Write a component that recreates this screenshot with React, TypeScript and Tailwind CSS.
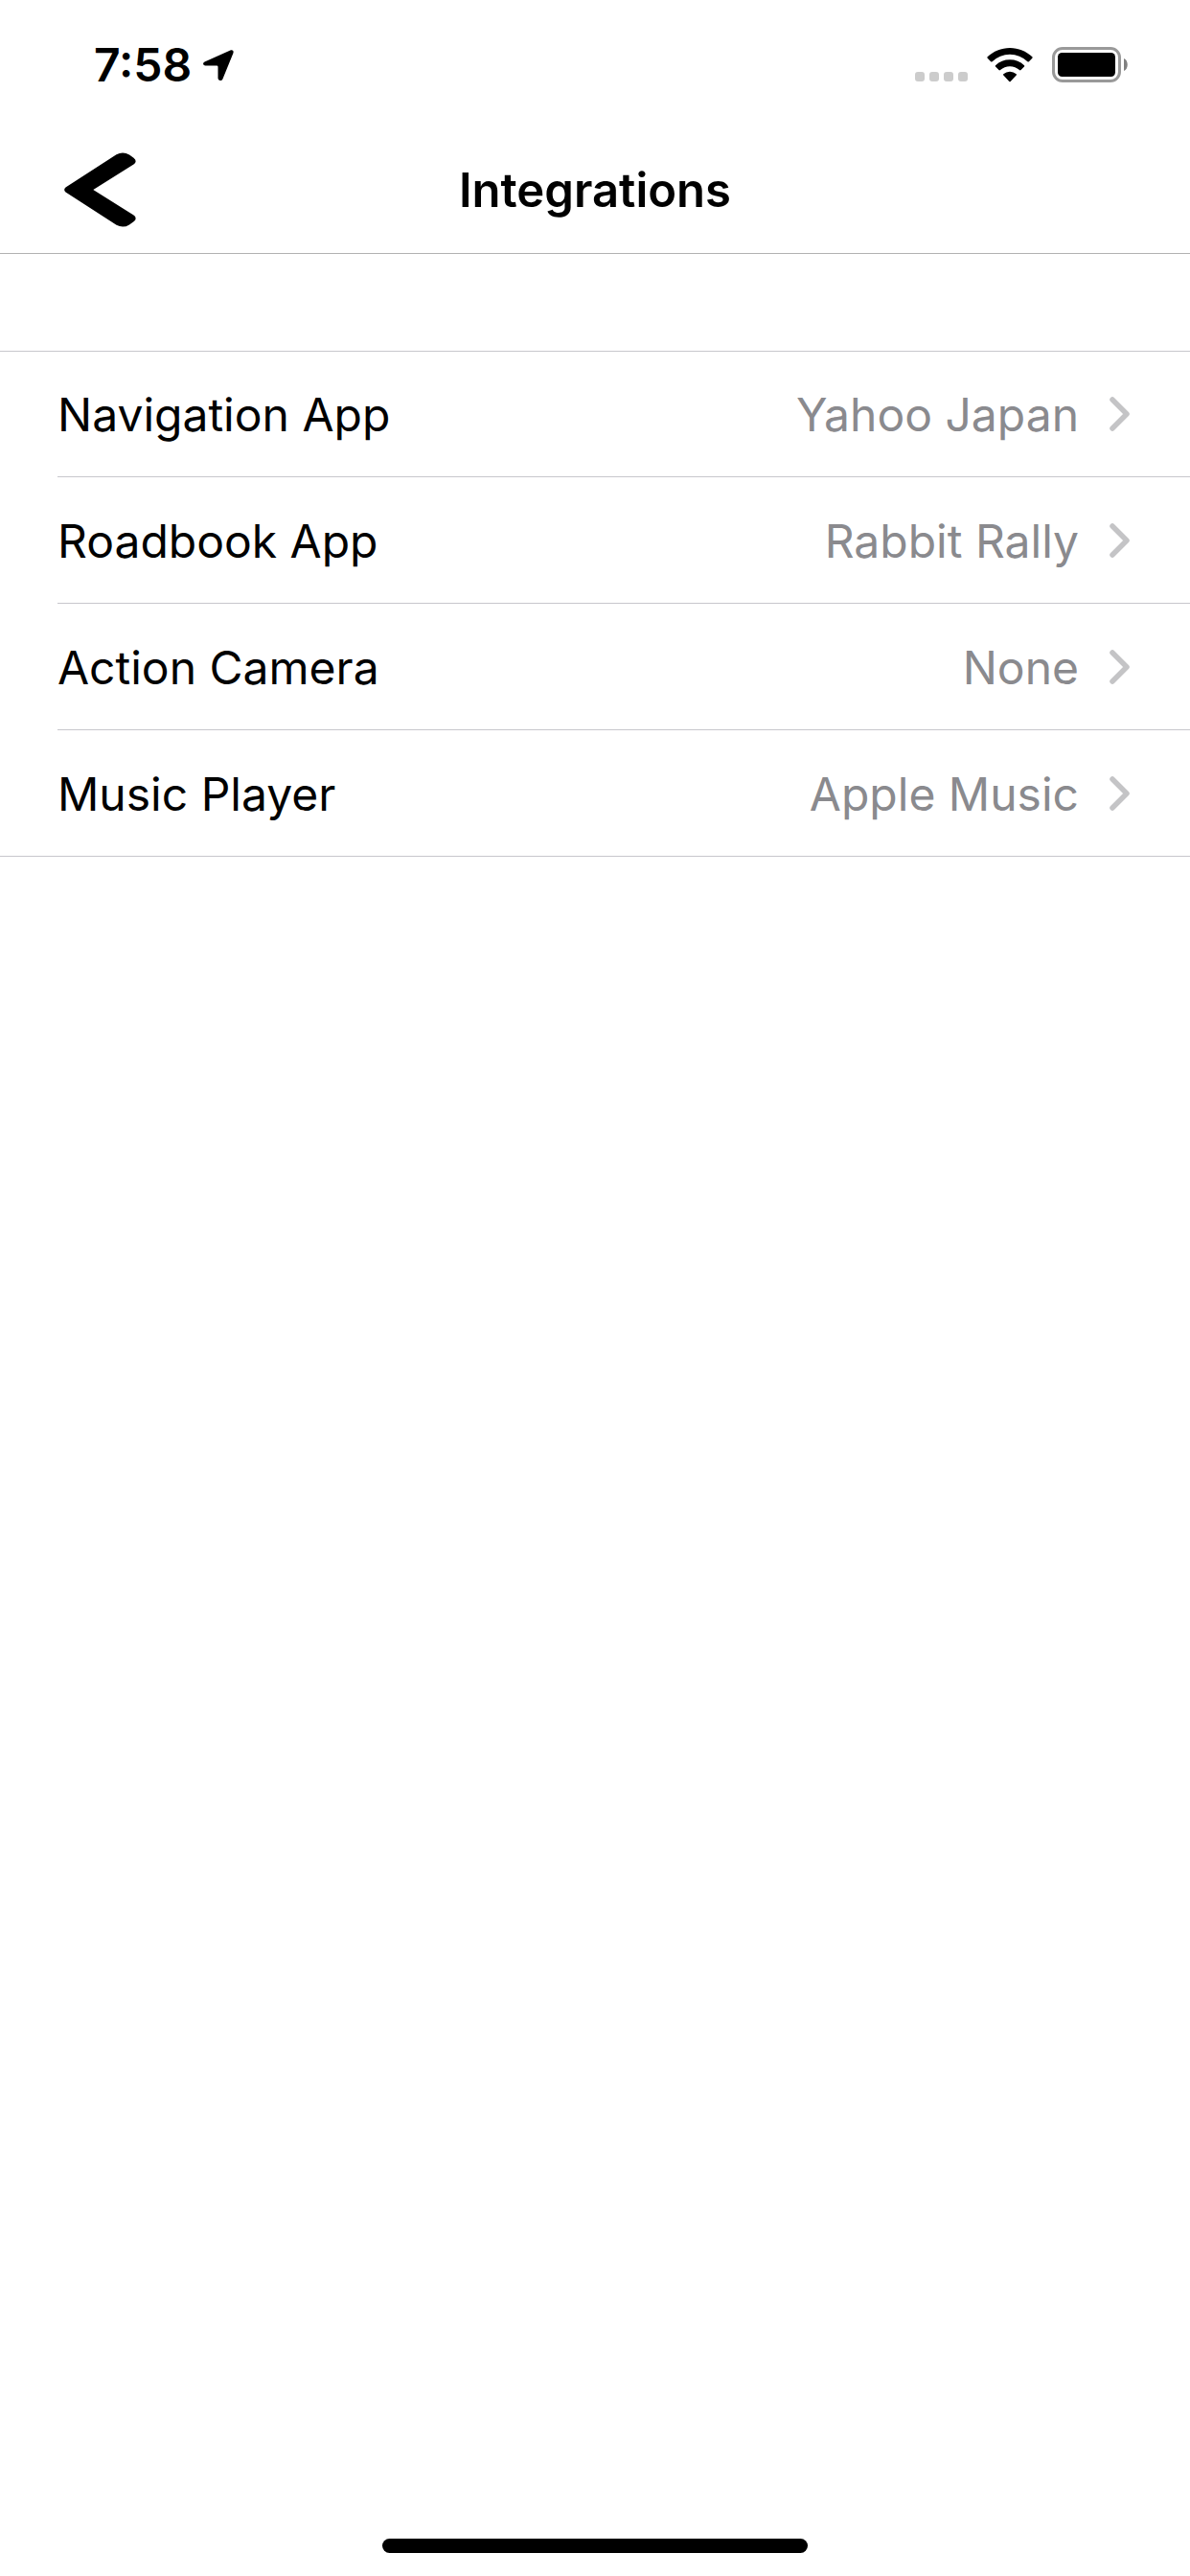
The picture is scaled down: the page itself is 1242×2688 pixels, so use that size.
const integrations = [
  { label: "Navigation App", value: "Yahoo Japan" },
  { label: "Roadbook App", value: "Rabbit Rally" },
  { label: "Action Camera", value: "None" },
  { label: "Music Player", value: "Apple Music" },
];

function LocationArrow() {
  return (
    <svg className="h-8 w-8" viewBox="0 0 32 32" aria-hidden="true">
      <path
        d="M1.6 12.6 28.4.6C30.6-.3 32.2 1 31.4 3.400L20.400 30.400C19.400 32.600 15.600 32.600 15.500 29.600V17.800Q15.500 16.400 14.100 16.400H2.400C-.2 16.300-.8 13.700 1.600 12.600Z"
        fill="currentColor"
      />
    </svg>
  );
}

function SignalDots() {
  return (
    <div className="flex gap-[5px] pt-6" role="img" aria-label="No signal">
      <span className="size-[10px] rounded-[3px] bg-[#cccccc]" />
      <span className="size-[10px] rounded-[3px] bg-[#cccccc]" />
      <span className="size-[10px] rounded-[3px] bg-[#cccccc]" />
      <span className="size-[10px] rounded-[3px] bg-[#cccccc]" />
    </div>
  );
}

function WifiIcon() {
  return (
    <svg className="h-9 w-12" viewBox="0 0 48 36" role="img" aria-label="Wi-Fi">
      <g fill="currentColor">
        <path d="M24 0C33 0 41.200 3.500 47.300 9.300Q48 10 47.300 10.700L43.900 14.200Q43.200 14.900 42.400 14.200A26.500 26.500 0 0 0 5.600 14.200Q4.800 14.900 4.100 14.200L.7 10.700Q0 10 .7 9.300C6.800 3.500 15 0 24 0Z" />
        <path d="M24 12.300A22 22 0 0 1 39 18.200Q39.700 18.900 39 19.600L35.500 23.100Q34.800 23.700 34 23.100A15 15 0 0 0 14 23.100Q13.200 23.700 12.500 23.100L9 19.600Q8.300 18.900 9 18.200A22 22 0 0 1 24 12.300Z" />
        <path d="M24 24.700A10 10 0 0 1 30.700 27.200Q31.400 27.900 30.700 28.600L24.700 35Q24 35.700 23.300 35L17.300 28.600Q16.600 27.900 17.300 27.200A10 10 0 0 1 24 24.700Z" />
      </g>
    </svg>
  );
}

function BatteryIcon() {
  return (
    <svg className="h-[37px] w-20" viewBox="0 0 80 37" role="img" aria-label="Battery full">
      <rect x="1.500" y="1.500" width="69" height="34" rx="9.500" fill="none" stroke="#999999" strokeWidth="3" />
      <rect x="6" y="6" width="60" height="25" rx="4.500" fill="currentColor" />
      <path d="M75 12C80 14 80 23 75 25Z" fill="#808080" />
    </svg>
  );
}

function BackIcon() {
  return (
    <svg className="h-[78px] w-[75px]" viewBox="0 0 75 78" aria-hidden="true">
      <path
        d="M1.500 36.500 54.500 2.200Q61.500-1.600 68 2.600L72.500 5.700Q76.800 9.200 72.500 12.400L30.300 39 72.500 65.600Q76.800 68.800 72.500 72.300L68 75.400Q61.500 79.600 54.500 75.800L1.500 41.500Q-1.200 39 1.500 36.500Z"
        fill="currentColor"
      />
    </svg>
  );
}

function Chevron() {
  return (
    <svg className="h-9 w-[21px] shrink-0 text-[#c4c4c6]" viewBox="0 0 21 36" aria-hidden="true">
      <path
        d="M3 3 18 18 3 33"
        fill="none"
        stroke="currentColor"
        strokeWidth="5.500"
        strokeLinecap="round"
        strokeLinejoin="round"
      />
    </svg>
  );
}

export default function App() {
  return (
    <div className="flex min-h-screen flex-col bg-white font-['Inter',sans-serif] text-black">
      <div className="flex h-[132px] items-start justify-between pt-10 pr-16 pl-[98px]">
        <div className="flex items-center gap-3">
          <span className="text-[48px] leading-[56px] font-semibold">7:58</span>
          <LocationArrow />
        </div>
        <div className="flex items-center gap-5 pt-[9px]">
          <SignalDots />
          <WifiIcon />
          <BatteryIcon />
        </div>
      </div>

      <header className="grid h-[133px] grid-cols-[1fr_auto_1fr] items-center border-b border-[#b2b2b2] px-[67px]">
        <button type="button" aria-label="Back" className="w-fit">
          <BackIcon />
        </button>
        <h1 className="pt-0.5 text-[49px] leading-[60px] font-semibold">Integrations</h1>
      </header>

      <main className="grow pt-[101px]">
        <ul className="border-y border-[#c8c7cc]">
          {integrations.map(({ label, value }) => (
            <li key={label} className="group pl-[60px]">
              <button
                type="button"
                className="flex h-[132px] w-full items-center border-b border-[#c8c7cc] pr-[63px] text-left text-[48px] leading-[60px] group-first:h-[131px] group-last:h-[131px] group-last:border-b-0"
              >
                <span className="grow pt-0.5">{label}</span>
                <span className="mr-8 pt-0.5 text-[#8a8a8e]">{value}</span>
                <Chevron />
              </button>
            </li>
          ))}
        </ul>
      </main>

      <div className="mx-auto mb-6 h-[15px] w-[444px] rounded-full bg-black" />
    </div>
  );
}
